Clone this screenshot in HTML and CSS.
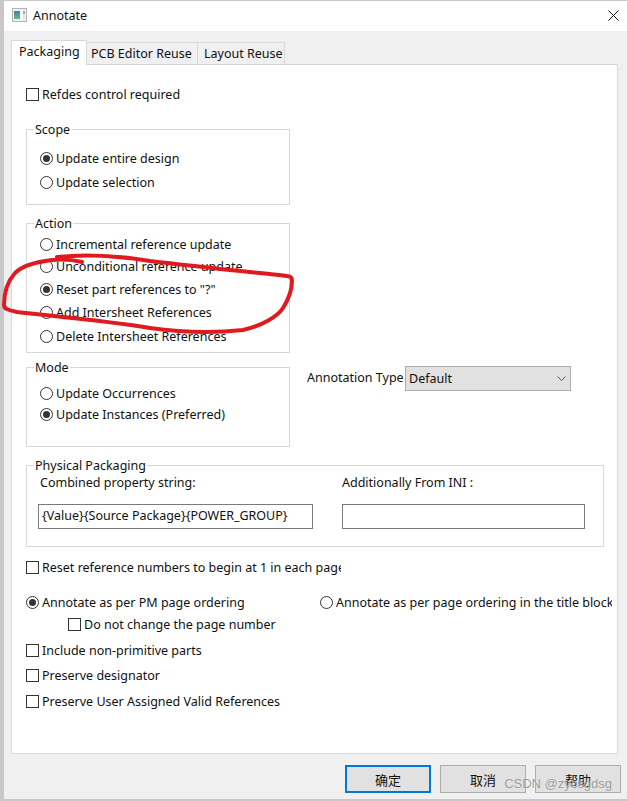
FILE: index.html
```html
<!DOCTYPE html>
<html lang="en">
<head>
<meta charset="utf-8">
<title>Annotate</title>
<link rel="stylesheet" href="styles.css">
</head>
<body>
<div class="window">
  <header class="titlebar">
    <svg class="app-icon" width="15" height="14" viewBox="0 0 15 14"><defs><linearGradient id="ig" x1="0" y1="0" x2="0" y2="1"><stop offset="0" stop-color="#3f7fa8"/><stop offset="1" stop-color="#6fb98a"/></linearGradient></defs><rect x=".5" y=".5" width="14" height="13" fill="#f0f0f0" stroke="#b4b4b4"/><rect x="2" y="3" width="6" height="8" fill="url(#ig)"/><rect x="8" y="3" width="3" height="8" fill="#fff"/><rect x="11" y="3" width="2" height="3" fill="#8fb7a0"/><rect x="11" y="7" width="2" height="4" fill="#d8e8de"/></svg>
    <span class="title">Annotate</span>
    <svg class="close" width="11" height="11" viewBox="0 0 11 11"><path d="M.5.5l10 10M10.5.5l-10 10" stroke="#111" fill="none"/></svg>
  </header>
  <div class="body">
    <nav class="tabs">
      <div class="tab active">Packaging</div>
      <div class="tab">PCB Editor Reuse</div>
      <div class="tab">Layout Reuse</div>
    </nav>
    <main class="pane">
      <label class="opt refdes"><i class="check"></i>Refdes control required</label>

      <fieldset class="group scope">
        <legend>Scope</legend>
        <label class="opt"><i class="radio on"></i>Update entire design</label>
        <label class="opt"><i class="radio"></i>Update selection</label>
      </fieldset>

      <fieldset class="group action">
        <legend>Action</legend>
        <label class="opt"><i class="radio"></i>Incremental reference update</label>
        <label class="opt"><i class="radio"></i>Unconditional reference update</label>
        <label class="opt"><i class="radio on"></i>Reset part references to "?"</label>
        <label class="opt"><i class="radio"></i>Add Intersheet References</label>
        <label class="opt"><i class="radio"></i>Delete Intersheet References</label>
      </fieldset>

      <div class="mode-row">
        <fieldset class="group mode">
          <legend>Mode</legend>
          <label class="opt"><i class="radio"></i>Update Occurrences</label>
          <label class="opt"><i class="radio on"></i>Update Instances (Preferred)</label>
        </fieldset>
        <div class="annotation-type">
          <span class="at-label">Annotation Type</span>
          <div class="select">Default<svg width="9" height="5" viewBox="0 0 9 5"><path d="M.5.500L4.500 4.500 8.500.500" stroke="#555" fill="none"/></svg></div>
        </div>
      </div>

      <fieldset class="group physical">
        <legend>Physical Packaging</legend>
        <div class="physical-grid">
          <div class="field combined">
            <div class="field-label">Combined property string:</div>
            <div class="input">{Value}{Source Package}{POWER_GROUP}</div>
          </div>
          <div class="field additional">
            <div class="field-label">Additionally From INI :</div>
            <div class="input"></div>
          </div>
        </div>
      </fieldset>

      <label class="opt reset"><i class="check"></i><span class="clip">Reset reference numbers to begin at 1 in each page</span></label>

      <div class="order-row">
        <label class="opt order-a"><i class="radio on"></i>Annotate as per PM page ordering</label>
        <label class="opt order-b"><i class="radio"></i><span class="clip">Annotate as per page ordering in the title block</span></label>
      </div>
      <label class="opt nochange"><i class="check"></i>Do not change the page number</label>

      <label class="opt include"><i class="check"></i>Include non-primitive parts</label>
      <label class="opt designator"><i class="check"></i>Preserve designator</label>
      <label class="opt userrefs"><i class="check"></i>Preserve User Assigned Valid References</label>
    </main>
    <footer class="buttons">
      <button class="btn default">确定</button>
      <button class="btn">取消</button>
      <button class="btn">帮助</button>
    </footer>
  </div>
  <svg class="scribble" width="300" height="90" viewBox="0 245 300 90"><path d="M82 262C70 259 62 259 52 260C35 262 22 266 15 273C7 282 4 295 4 305C4 309 8 310 17 312C50 316 100 320 150 328C185 333 217 333 243 330C262 326 278 316 283 308C288 300 292 290 292 281C292 277 290 276 287 276C250 272 200 267 150 261C120 256 85 254 57 257" fill="none" stroke="#e01a1e" stroke-width="4" stroke-linecap="round" stroke-linejoin="round"/></svg>
  <div class="watermark">CSDN @zycsgdsg</div>
</div>
</body>
</html>
```
FILE: styles.css
```css
* { box-sizing: border-box; }
html, body { margin: 0; padding: 0; }
body { width: 627px; height: 801px; overflow: hidden; font-family: "Noto Sans", "Noto Sans CJK SC", sans-serif; font-size: 12.5px; color: #111; }
.window { position: relative; width: 627px; height: 801px; background: #f0f0f0; border-top: 1px solid #c8c8c8; border-left: 4px solid #c8c8c8; border-bottom: 2px solid #c8c8c8; }
.titlebar { height: 30px; background: #fff; display: flex; align-items: center; padding: 0 8px 2px 8px; }
.app-icon { margin-right: 6px; }
.title { flex: 1; }
.body { padding: 9px 6px 0 7px; }
.tabs { display: flex; align-items: flex-end; height: 25px; position: relative; z-index: 1; margin-bottom: -1px; }
.tab { height: 23px; width: 111px; padding: 0 0 0 4px; line-height: 22px; background: #f0f0f0; border: 1px solid #d9d9d9; border-left: 0; white-space: nowrap; }
.tab:last-child { width: 87px; padding-left: 6px; }
.tab.active { height: 25px; width: 76px; background: #fff; border-left: 1px solid #d9d9d9; border-bottom: 0; padding: 0 0 0 7px; }
.pane { height: 690px; margin-right: 3px; background: #fff; border: 1px solid #d9d9d9; padding: 0 14px; display: flex; flex-direction: column; align-items: flex-start; }
.opt { display: flex; align-items: center; height: 18px; white-space: nowrap; }
.check { width: 13px; height: 13px; border: 1px solid #333; margin-right: 3px; background: #fff; flex: none; }
.radio { width: 13px; height: 13px; border: 1px solid #333; border-radius: 50%; margin-right: 3px; background: #fff; flex: none; position: relative; }
.radio.on::after { content: ""; position: absolute; left: 2px; top: 2px; width: 7px; height: 7px; border-radius: 50%; background: #333; }
.refdes { margin-top: 20px; }
.group { margin: 0; padding: 0; border: 1px solid #d9d9d9; width: 264px; min-width: 0; display: flex; flex-direction: column; }
.group legend { padding: 0 1px; margin-left: 7px; line-height: 15px; height: 14px; }
.group .opt { margin-left: 13px; }
.scope { height: 83px; margin-top: 19px; padding-top: 13px; gap: 6px; }
.action { height: 137px; margin-top: 11px; padding-top: 5px; gap: 5px; }
.action .opt:nth-of-type(2) { margin-top: -1px; }
.action .opt:nth-of-type(5) { margin-top: 1px; }
.mode-row { display: flex; margin-top: 7px; align-items: flex-start; }
.mode { height: 87px; padding-top: 10px; gap: 3px; }
.annotation-type { display: flex; margin: 6px 0 0 17px; align-items: flex-start; }
.at-label { line-height: 24px; width: 98px; }
.select { width: 166px; height: 25px; background: #e1e1e1; border: 1px solid #adadad; display: flex; align-items: center; justify-content: space-between; padding: 0 4px 0 3px; }
.physical { width: 578px; height: 89px; margin-top: 11px; padding-top: 2px; }
.physical-grid { display: flex; margin-left: 11px; }
.field-label { margin-left: 2px; line-height: 18px; height: 30px; }
.input { height: 25px; border: 1px solid #7a7a7a; background: #fff; line-height: 22px; padding: 0 3px; white-space: nowrap; overflow: hidden; }
.combined { width: 275px; }
.additional { width: 243px; margin-left: 29px; }
.additional .field-label { margin-left: 0; }
.reset { margin-top: 11px; }
.reset .clip { display: block; width: 299px; overflow: hidden; }
.order-row { display: flex; margin-top: 17px; }
.order-a { width: 294px; }
.order-b .clip { display: block; width: 276px; overflow: hidden; }
.nochange { margin: 4px 0 0 42px; }
.include { margin-top: 8px; }
.designator { margin-top: 7px; }
.userrefs { margin-top: 8px; }
.buttons { display: flex; justify-content: flex-end; gap: 9px; padding-top: 11px; }
.btn { width: 86px; height: 28px; background: #e1e1e1; border: 1px solid #adadad; font: inherit; font-size: 13px; color: #111; padding: 0; }
.btn.default { border: 2px solid #0078d7; }
.scribble { position: absolute; left: -4px; top: 244px; }
.watermark { position: absolute; right: 15px; top: 775px; font-family: "Liberation Sans", sans-serif; font-size: 13px; color: rgba(130,130,130,.8); text-shadow: 0 0 1px rgba(255,255,255,.8); }
```
